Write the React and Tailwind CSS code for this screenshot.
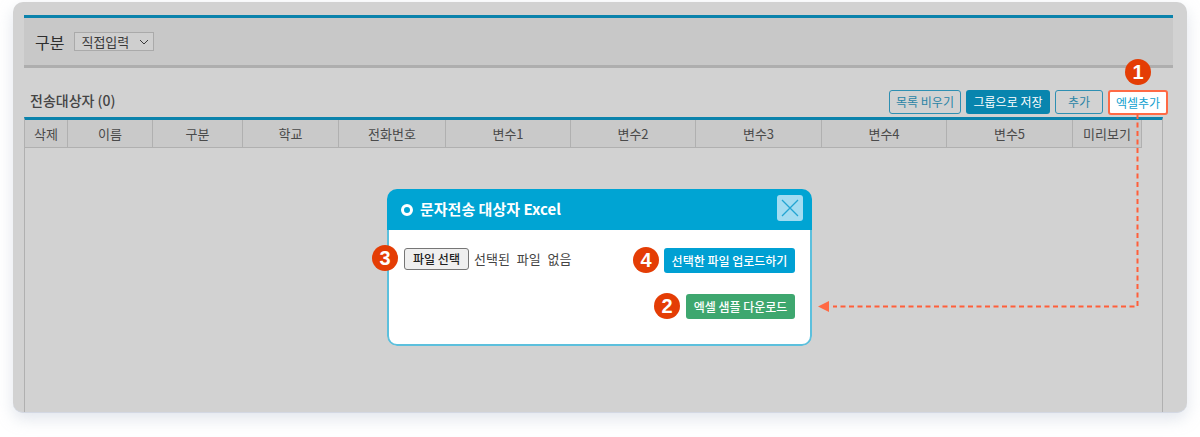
const FONT = { fontFamily: '"Noto Sans CJK KR", "Noto Sans", sans-serif' };

const cols = [
  ["삭제", "w-[43px]"], ["이름", "w-[85px]"], ["구분", "w-[90px]"], ["학교", "w-[96px]"], ["전화번호", "w-[107px]"],
  ["변수1", "w-[125px]"], ["변수2", "w-[125px]"], ["변수3", "w-[126px]"], ["변수4", "w-[125px]"], ["변수5", "w-[126px]"], ["미리보기", "w-[69px]"],
];

function Badge({ n, className }) {
  return (
    <div className={"absolute w-[26px] h-[26px] rounded-full bg-[#e43d05] text-white flex items-center justify-center text-[20px] font-bold leading-none " + className} style={{ fontFamily: '"Liberation Sans", sans-serif' }}>
      {n}
    </div>
  );
}

function OutlineBtn({ children, className = "" }) {
  return (
    <div className={"h-[24px] flex items-center justify-center rounded-[3px] border border-[#2e8fb2] text-[12px] text-[#2a84a6] " + className}>{children}</div>
  );
}

export default function App() {
  return (
    <div className="w-[1200px] h-[437px] bg-white overflow-hidden pt-[2px] pl-[13px]" style={FONT}>
      <div className="relative w-[1174px] h-[411px] bg-[#d2d2d2] rounded-[10px] overflow-visible shadow-[0_6px_16px_rgba(170,180,200,0.35)] border-b border-[#d3d8e3] pt-[13px] pl-[11px]">
        <div className="w-[1149px] h-[53px] bg-[#c8c8c8] border-t-[3px] border-t-[#0b83ac] border-b-[3px] border-b-[#aeaeae] flex items-center pl-[11px]">
          <span className="text-[16px] text-[#2e2e2e] leading-none">구분</span>
          <div className="ml-[10px] w-[80px] h-[19px] bg-[#cfcfcf] border border-[#aaaaaa] flex items-center pl-[6px] text-[13px] text-[#3a3a3a] leading-none">
            <span>직접입력</span>
            <svg className="ml-[10px]" width="10" height="6" viewBox="0 0 10 6" fill="none" stroke="#3a3a3a" strokeWidth="1"><path d="M1 1l4 4 4-4" /></svg>
          </div>
        </div>

        <div className="w-[1149px] h-[49px] flex items-start justify-between">
          <div className="ml-[6px] mt-[24px] text-[14px] font-medium text-[#444] leading-[16px]">전송대상자 (0)</div>
          <div className="mt-[22px] flex gap-[5px] pr-[5px]">
            <OutlineBtn className="w-[72px]">목록 비우기</OutlineBtn>
            <div className="w-[84px] h-[24px] flex items-center justify-center rounded-[3px] bg-[#0885ae] text-white text-[12px]">그룹으로 저장</div>
            <OutlineBtn className="w-[48px]">추가</OutlineBtn>
            <div className="w-[60px] h-[25px] flex items-center justify-center rounded-[3px] bg-white border-2 border-[#ff6a45] text-[#12a1cf] text-[12px]">엑셀추가</div>
          </div>
        </div>

        <div className="w-[1139px] h-[295px] border-t-[3px] border-t-[#0b83ac] border-l border-r border-[#b0b0b0]">
          <div className="flex h-[28px] w-[1117px] bg-[#c9c9c9] border-b border-[#b0b0b0]">
            {cols.map(([t, w]) => (
              <div key={t} className={w + " shrink-0 flex items-center justify-center text-[13px] text-[#4a4a4a] border-r border-[#b0b0b0]"}>{t}</div>
            ))}
          </div>
        </div>

        <svg className="absolute left-[800px] top-[110px]" width="340" height="200" viewBox="0 0 340 200" fill="none">
          <path d="M324.5 2V194.5H20" stroke="#ff5f3a" strokeWidth="2" strokeDasharray="5 3.5" />
          <path d="M5 194.5l11-5.5v11z" fill="#ff6a45" />
        </svg>

        <div className="absolute left-[374px] top-[187px] w-[425px] h-[157px] flex flex-col rounded-[10px] overflow-hidden">
          <div className="h-[41px] shrink-0 bg-[#00a4d3] flex items-center pl-[14px] relative">
            <span className="w-[12px] h-[12px] rounded-full border-[3px] border-white" />
            <span className="ml-[7px] text-white text-[15px] font-bold">문자전송 대상자 Excel</span>
            <div className="absolute right-[9px] top-[6px] w-[26px] h-[26px] rounded-[3px] bg-[#a3dcf1] flex items-center justify-center">
              <svg width="20" height="20" viewBox="0 0 20 20" fill="none" stroke="#23a5d2" strokeWidth="1.3"><path d="M2 2l16 16M18 2L2 18" /></svg>
            </div>
          </div>
          <div className="flex-1 flex justify-between bg-white border-x-2 border-b-2 border-[#5cc0dd] rounded-b-[10px] pl-[15px] pr-[15px] pt-[18px]">
            <div className="flex items-start">
              <div className="w-[65px] h-[22px] rounded-[3px] bg-[#efefef] border border-[#767676] flex items-center justify-center text-[12px] font-medium text-[#222]">파일 선택</div>
              <span className="ml-[5px] h-[22px] flex items-center text-[13px] text-[#444] [word-spacing:4px]">선택된 파일 없음</span>
            </div>
            <div className="flex flex-col items-end gap-[21px]">
              <div className="w-[131px] h-[25px] rounded-[3px] bg-[#00a0d3] text-white text-[12px] font-medium flex items-center justify-center">선택한 파일 업로드하기</div>
              <div className="w-[109px] h-[25px] rounded-[3px] bg-[#3ea76f] text-white text-[12px] font-medium flex items-center justify-center">엑셀 샘플 다운로드</div>
            </div>
          </div>
        </div>

        <Badge n="1" className="left-[1112px] top-[57px]" />
        <Badge n="2" className="left-[641px] top-[291px]" />
        <Badge n="3" className="left-[359px] top-[243px]" />
        <Badge n="4" className="left-[620px] top-[245px]" />
      </div>
    </div>
  );
}
